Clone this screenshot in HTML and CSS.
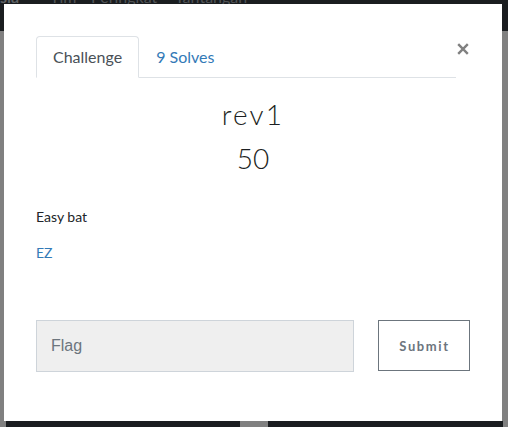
FILE: index.html
```html
<!DOCTYPE html>
<html lang="id">
<head>
<meta charset="utf-8">
<title>rev1</title>
<link rel="stylesheet" href="styles.css">
</head>
<body>
<div class="page">
  <nav class="navbar">
    <span class="nav-item brand">sia</span>
    <span class="nav-item">Tim</span>
    <span class="nav-item">Peringkat</span>
    <span class="nav-item">Tantangan</span>
  </nav>
  <main class="backdrop"></main>
  <footer class="bottom">
    <div class="bottom-left"></div>
    <div class="bottom-gap"></div>
    <div class="bottom-right"></div>
  </footer>
</div>

<div class="modal">
  <div class="modal-body">
    <div class="tabs-row">
      <ul class="tabs">
        <li class="tab active">Challenge</li>
        <li class="tab link">9 Solves</li>
      </ul>
      <button class="close" aria-label="Close">
        <svg width="12" height="12" viewBox="0 0 12 12"><path d="M1.2 1.2 L10.8 10.8 M10.8 1.2 L1.2 10.8" stroke="#808080" stroke-width="2.4" stroke-linecap="butt"/></svg>
      </button>
    </div>
    <h3 class="chal-name">rev1</h3>
    <h4 class="chal-value">50</h4>
    <p class="chal-desc">Easy bat</p>
    <p class="chal-link">EZ</p>
    <form class="submit-row">
      <input class="flag-input" type="text" placeholder="Flag">
      <button class="submit-btn" type="button">Submit</button>
    </form>
  </div>
</div>
</body>
</html>
```

FILE: styles.css
```css
* { box-sizing: border-box; }

html, body {
  margin: 0;
  padding: 0;
}

body {
  width: 508px;
  height: 427px;
  overflow: hidden;
  background: #808080;
  font-family: Lato, "Noto Sans", sans-serif;
  position: relative;
}

.page {
  height: 427px;
  display: flex;
  flex-direction: column;
}

.navbar {
  height: 31px;
  background: #1a1d20;
  display: grid;
  grid-template-columns: 50px 41px 84px auto;
  align-items: start;
  overflow: hidden;
}

.nav-item {
  font-size: 16px;
  line-height: 16px;
  margin-top: -11px;
  color: #505356;
  white-space: nowrap;
}

.brand {
  font-weight: 700;
  color: #5e6164;
}

.backdrop {
  flex: 1;
}

.bottom {
  height: 6px;
  display: flex;
  padding: 0 5px 0 6px;
}

.bottom-left {
  width: 234px;
  background: #1a1d20;
}

.bottom-gap {
  width: 28px;
  background: #808080;
}

.bottom-right {
  flex: 1;
  background: #1a1d20;
}

.modal {
  position: absolute;
  left: 4px;
  top: 4px;
  width: 498px;
  height: 417px;
  background: #fff;
}

.modal-body {
  padding: 32px 32px 0 32px;
}

.tabs-row {
  display: flex;
  align-items: flex-start;
}

.tabs {
  flex: 1;
  display: flex;
  list-style: none;
  margin: 0;
  padding: 0;
  border-bottom: 1px solid #dee2e6;
}

.tab {
  font-size: 16px;
  line-height: 24px;
  padding: 8px 16px;
  border: 1px solid transparent;
  border-radius: 4px 4px 0 0;
  margin-bottom: -1px;
}

.tab.active {
  color: #495057;
  border-color: #dee2e6 #dee2e6 #fff;
  background: #fff;
}

.tab.link {
  color: #337ab7;
}

.close {
  width: 14px;
  height: 12px;
  margin-top: 7px;
  padding: 0 0 0 1px;
  border: 0;
  background: transparent;
  display: flex;
  align-items: flex-start;
}

.close svg { display: block; }

.chal-name {
  margin: 19px 0 0;
  text-align: center;
  font-size: 28px;
  line-height: 34px;
  font-weight: 300;
  letter-spacing: 2.2px;
  color: #1c1f22;
}

.chal-value {
  margin: 10px 0 0;
  text-align: center;
  font-size: 28px;
  line-height: 34px;
  font-weight: 300;
  color: #1c1f22;
}

.chal-desc {
  margin: 31px 0 0;
  font-size: 14px;
  line-height: 21px;
  color: #212529;
}

.chal-link {
  margin: 15px 0 0;
  font-size: 14px;
  line-height: 21px;
  color: #337ab7;
}

.submit-row {
  margin: 57px 0 0;
  display: flex;
  align-items: flex-start;
  gap: 24px;
}

.flag-input {
  width: 318px;
  height: 52px;
  margin: 0;
  padding: 0 14px;
  border: 1px solid #ced4da;
  background: #efefef;
  font-family: "Liberation Sans", Arial, sans-serif;
  font-size: 16px;
  color: #495057;
  outline: none;
}

.flag-input::placeholder {
  color: #6c757d;
  opacity: 1;
}

.submit-btn {
  width: 92px;
  height: 51px;
  margin: 0;
  border: 1px solid #6c757d;
  background: #fff;
  color: #6c757d;
  font-family: Lato, sans-serif;
  font-weight: 700;
  font-size: 13px;
  letter-spacing: 1.6px;
  padding: 0 0 0 1px;
}
```
